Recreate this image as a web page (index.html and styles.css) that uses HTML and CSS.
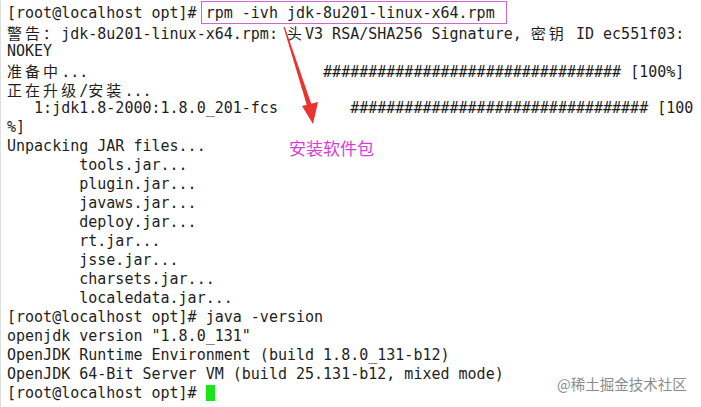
FILE: index.html
```html
<!DOCTYPE html>
<html lang="zh">
<head>
<meta charset="utf-8">
<title>Terminal</title>
<link rel="stylesheet" href="styles.css">
</head>
<body>
<div class="screen">
  <div class="term">
    <div class="ln">[root@localhost opt]# <span class="hl">rpm -ivh jdk-8u201-linux-x64.rpm</span></div>
    <div class="ln"><span class="cjk">警告：</span>jdk-8u201-linux-x64.rpm: <span class="cjk">头</span>V3 RSA/SHA256 Signature, <span class="cjk">密钥</span> ID ec551f03:</div>
    <div class="ln">NOKEY</div>
    <div class="ln"><span class="cjk">准备中</span>...                          ################################# [100%]</div>
    <div class="ln"><span class="cjk">正在升级</span>/<span class="cjk">安装</span>...</div>
    <div class="ln">   1:jdk1.8-2000:1.8.0_201-fcs        ################################# [100</div>
    <div class="ln">%]</div>
    <div class="ln">Unpacking JAR files...</div>
    <div class="ln">        tools.jar...</div>
    <div class="ln">        plugin.jar...</div>
    <div class="ln">        javaws.jar...</div>
    <div class="ln">        deploy.jar...</div>
    <div class="ln">        rt.jar...</div>
    <div class="ln">        jsse.jar...</div>
    <div class="ln">        charsets.jar...</div>
    <div class="ln">        localedata.jar...</div>
    <div class="ln">[root@localhost opt]# java -version</div>
    <div class="ln">openjdk version "1.8.0_131"</div>
    <div class="ln">OpenJDK Runtime Environment (build 1.8.0_131-b12)</div>
    <div class="ln">OpenJDK 64-Bit Server VM (build 25.131-b12, mixed mode)</div>
    <div class="ln">[root@localhost opt]# <span class="cursor"></span></div>
  </div>

  <svg class="arrow" width="701" height="407" viewBox="0 0 701 407">
    <polygon points="282.5,27 283.8,27 311,106 306.5,107.5" fill="#e8332f"/>
    <polygon points="301,106 317,102 312,124" fill="#e8332f"/>
  </svg>
  <div class="note">安装软件包</div>
  <div class="wm">@稀土掘金技术社区</div>
</div>
</body>
</html>
```

FILE: styles.css
```css
html, body {
  margin: 0;
  padding: 0;
  background: #ffffff;
}

.screen {
  position: relative;
  width: 701px;
  height: 407px;
  overflow: hidden;
  border-left: 1px solid #dedede;
  box-sizing: border-box;
}

.term {
  padding: 4px 0 0 6px;
  font-family: "DejaVu Sans Mono", "Noto Sans CJK SC", monospace;
  font-size: 15px;
  color: #1e1e1e;
}

.ln {
  height: 19px;
  line-height: 19px;
  white-space: pre;
}

.cjk {
  font-family: "Noto Sans CJK SC", sans-serif;
  font-size: 15px;
  letter-spacing: 3.06px;
  line-height: 19px;
}

.hl {
  position: relative;
  display: inline-block;
  height: 19px;
  vertical-align: top;
}

.hl::after {
  content: "";
  position: absolute;
  left: -5px;
  right: -12px;
  top: -3px;
  bottom: -1px;
  border: 1.5px solid #d067d0;
}

.cursor {
  display: inline-block;
  width: 9px;
  height: 16px;
  background: #19e619;
  vertical-align: -3px;
}

.arrow {
  position: absolute;
  left: 0;
  top: 0;
}

.note {
  position: absolute;
  left: 288px;
  top: 136px;
  font-family: "Noto Sans CJK SC", sans-serif;
  font-size: 17px;
  line-height: 24px;
  color: #d63fd6;
}

.wm {
  position: absolute;
  left: 556px;
  top: 374px;
  font-family: "Noto Sans CJK SC", sans-serif;
  font-size: 14.5px;
  line-height: 20px;
  color: #8c8c8c;
}
```
